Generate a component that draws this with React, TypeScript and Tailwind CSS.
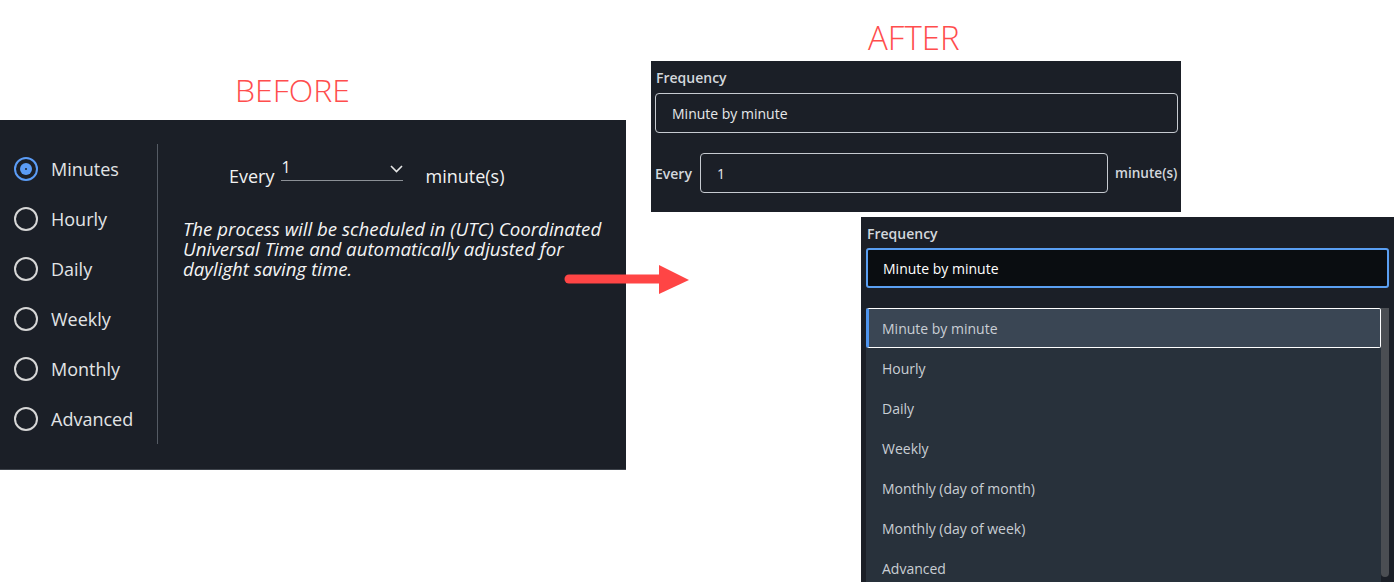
import React from 'react';

const FONT = { fontFamily: '"Open Sans", "Noto Sans", sans-serif' };

// Options shown in the old radio list
const oldOptions = ['Minutes', 'Hourly', 'Daily', 'Weekly', 'Monthly', 'Advanced'];

// Options shown in the new dropdown
const newOptions = [
  'Minute by minute',
  'Hourly',
  'Daily',
  'Weekly',
  'Monthly (day of month)',
  'Monthly (day of week)',
  'Advanced',
];

function Radio({ checked }: { checked: boolean }) {
  if (checked) {
    return (
      <div className="w-6 h-6 rounded-full border-[2.5px] border-[#5b9cf6] flex items-center justify-center shrink-0">
        <div className="w-3 h-3 rounded-full bg-[#5b9cf6] flex items-center justify-center">
          <div className="w-[2px] h-[2px] rounded-full bg-[#1b1f27]" />
        </div>
      </div>
    );
  }
  return <div className="w-6 h-6 rounded-full border-2 border-[#d6d6d6] shrink-0" />;
}

function BeforePanel() {
  return (
    <div className="absolute left-0 top-[120px] w-[626px] h-[350px] bg-[#1b1f27] border-b border-[#3f444c] flex">
      {/* Left: radio list */}
      <div className="w-[158px] mt-[24px] h-[300px] border-r border-[#555b64] pl-[14px]">
        {oldOptions.map((opt, idx) => (
          <div key={opt} className="h-[50px] flex items-center gap-[13px]">
            <Radio checked={idx === 0} />
            <span className="text-[18px] text-[#e2e4e6]">{opt}</span>
          </div>
        ))}
      </div>

      {/* Right: interval + note */}
      <div className="flex-1 pl-[25px]">
        <div className="flex items-start mt-[44px] pl-[46px]">
          <span className="text-[18px] leading-6 text-[#f2f2f2]">Every</span>
          <div className="ml-[7px] mt-[-5px] w-[122px] h-[22px] border-b border-[#8c9096] flex justify-between items-start">
            <span className="text-[16px] leading-[16px] text-[#f2f2f2]">1</span>
            <svg width="13" height="8" viewBox="0 0 13 8" className="mt-[6px]">
              <path d="M1 1 L6.5 6.5 L12 1" fill="none" stroke="#e6e6e6" strokeWidth="1.6" />
            </svg>
          </div>
          <span className="ml-[22px] text-[18px] leading-6 text-[#f2f2f2]">minute(s)</span>
        </div>
        <p className="mt-[31px] w-[438px] text-[18.7px] leading-[20px] italic text-[#f4f4f4]">
          The process will be scheduled in (UTC) Coordinated Universal Time and automatically
          adjusted for daylight saving time.
        </p>
      </div>
    </div>
  );
}

function AfterTop() {
  return (
    <div className="absolute left-[651px] top-[61px] w-[530px] h-[151px] bg-[#1b1f27] pl-[4px] pt-[7px]">
      <div className="pl-[1px] text-[14px] leading-5 font-semibold text-[#d3d7dc]">Frequency</div>
      <div className="mt-[5px] w-[523px] h-[40px] border border-[#c6cad0] rounded-[4px] flex items-center pl-[16px]">
        <span className="text-[14px] font-medium text-[#e6e8ea]">Minute by minute</span>
      </div>
      <div className="mt-[20px] flex items-center">
        <span className="text-[14px] font-semibold text-[#d3d7dc]">Every</span>
        <div className="ml-[8px] w-[408px] h-[40px] border border-[#c6cad0] rounded-[4px] flex items-center pl-[16px]">
          <span className="text-[14px] font-medium text-[#e6e8ea]">1</span>
        </div>
        <span className="ml-[7px] text-[13.6px] font-semibold text-[#d3d7dc]">minute(s)</span>
      </div>
    </div>
  );
}

function AfterDropdown() {
  return (
    <div className="absolute left-[861px] top-[217px] w-[533px] h-[365px] bg-[#1b1f27] pl-[5px] pt-[7px] overflow-hidden">
      <div className="pl-[1px] text-[14px] leading-5 font-semibold text-[#d3d7dc]">Frequency</div>
      <div className="mt-[4px] w-[523px] h-[40px] border-2 border-[#5a9ff2] rounded-[3px] bg-[#0a0d11] flex items-center pl-[15px]">
        <span className="text-[14px] font-medium text-white">Minute by minute</span>
      </div>
      <div className="mt-[20px] w-[523px] flex">
        <div className="w-[515px] bg-[#28313b]">
          {newOptions.map((opt, idx) =>
            idx === 0 ? (
              <div
                key={opt}
                className="h-[40px] flex items-center pl-[13px] bg-[#3a4654] border border-white border-l-[3px] border-l-[#4f95ef] rounded-[2px]"
              >
                <span className="text-[14px] text-[#c9ced4]">{opt}</span>
              </div>
            ) : (
              <div key={opt} className="h-[40px] flex items-center pl-[16px]">
                <span className="text-[14px] text-[#c9ced4]">{opt}</span>
              </div>
            )
          )}
        </div>
        <div className="w-[8px] h-[269px] bg-[#4b4e53] rounded-b-full" />
      </div>
    </div>
  );
}

function Arrow() {
  return (
    <svg className="absolute left-[560px] top-[262px]" width="132" height="36" viewBox="0 0 132 36">
      <line x1="9" y1="17" x2="102" y2="17" stroke="#ff4545" strokeWidth="9" strokeLinecap="round" />
      <polygon points="99,3 129,18 99,32" fill="#ff4545" />
    </svg>
  );
}

export default function App() {
  return (
    <div className="relative w-[1394px] h-[582px] bg-white overflow-hidden" style={FONT}>
      <div className="absolute left-[235px] top-[70px] text-[32px] font-light text-[#ff4d4d] leading-10">
        BEFORE
      </div>
      <div className="absolute left-[868px] top-[18px] text-[33px] font-light text-[#ff4d4d] leading-10">
        AFTER
      </div>
      <BeforePanel />
      <AfterTop />
      <AfterDropdown />
      <Arrow />
    </div>
  );
}
